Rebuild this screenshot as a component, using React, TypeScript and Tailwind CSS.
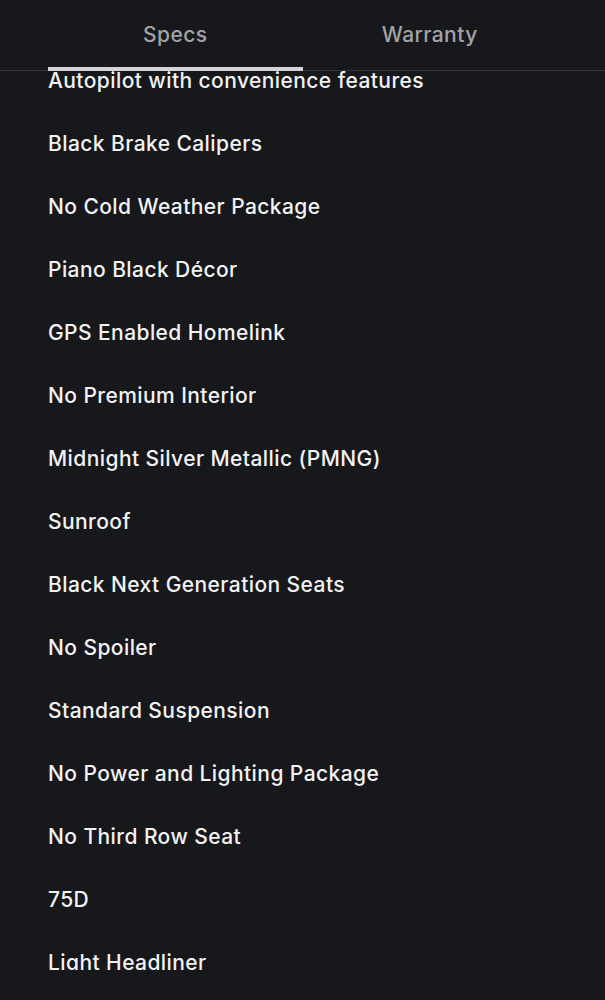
import { useState } from "react";

const specs = [
  "Autopilot with convenience features",
  "Black Brake Calipers",
  "No Cold Weather Package",
  "Piano Black Décor",
  "GPS Enabled Homelink",
  "No Premium Interior",
  "Midnight Silver Metallic (PMNG)",
  "Sunroof",
  "Black Next Generation Seats",
  "No Spoiler",
  "Standard Suspension",
  "No Power and Lighting Package",
  "No Third Row Seat",
  "75D",
  "Light Headliner",
];

export default function App() {
  const [tab, setTab] = useState("Specs");

  return (
    <div className="h-[1000px] bg-[#17181b] font-['Inter',sans-serif] overflow-hidden">
      <div className="h-[71px] border-b border-[#333438] px-[48px] flex">
        {["Specs", "Warranty"].map((t) => (
          <button
            key={t}
            onClick={() => setTab(t)}
            className="relative flex-1 h-full flex items-center justify-center text-[21px] tracking-[0.02em] font-medium text-[#a2a3a6]"
          >
            {t}
            {tab === t && (
              <span className="absolute left-0 right-0 bottom-[-1px] h-[4px] bg-[#d4d4d6]" />
            )}
          </button>
        ))}
      </div>

      <div className="h-[899px] overflow-hidden">
        <ul className="mt-[-22px] px-[48px]">
          {specs.map((s) => (
            <li
              key={s}
              className="h-[63px] flex items-center text-[21px] tracking-[0.02em] font-medium text-[#f2f2f3]"
            >
              {s}
            </li>
          ))}
        </ul>
      </div>
    </div>
  );
}
